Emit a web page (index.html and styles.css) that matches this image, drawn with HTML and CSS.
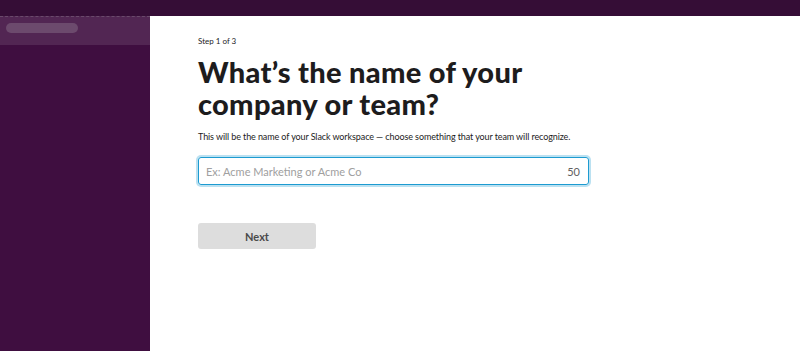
FILE: index.html
```html
<!DOCTYPE html>
<html lang="en">

<head>
    <meta charset="UTF-8">
    <meta name="viewport" content="width=device-width, initial-scale=1.0">
    <title>Create a workspace</title>
    <link rel="stylesheet" href="styles.css">
</head>

<body>
    <div class="topbar"></div>

    <div class="layout">
        <aside class="sidebar">
            <div class="sidebar-item">
                <span class="pill"></span>
            </div>
        </aside>

        <main class="content">
            <p class="step">Step 1 of 3</p>
            <h1>What’s the name of your company or team?</h1>
            <p class="lead">This will be the name of your Slack workspace — choose something that your team will recognize.</p>

            <form class="name-form">
                <div class="field">
                    <input type="text" placeholder="Ex: Acme Marketing or Acme Co">
                    <span class="counter">50</span>
                </div>
                <button type="submit" class="next">Next</button>
            </form>
        </main>
    </div>
</body>

</html>
```

FILE: styles.css
```css
body {
    font-family: Lato, "Noto Sans", sans-serif;
    margin: 0;
    padding: 0;
    background-color: #ffffff;
    color: #1d1c1d;
}

.topbar {
    height: 16px;
    background-color: #350d36;
}

.layout {
    display: flex;
    height: 335px;
}

.sidebar {
    width: 150px;
    flex-shrink: 0;
    background-color: #3f0e40;
}

.sidebar-item {
    height: 29px;
    background-color: #522653;
    border-top: 1px dashed #6a4a6b;
    box-sizing: border-box;
    padding: 6px 6px;
}

.pill {
    display: block;
    width: 72px;
    height: 10px;
    border-radius: 5px;
    background-color: #6c4a6d;
}

.content {
    padding: 20px 48px;
    flex: 1;
}

.step {
    font-size: 8px;
    margin: 0 0 10px 0;
    color: #1d1c1d;
}

h1 {
    font-size: 29px;
    line-height: 32px;
    font-weight: 900;
    margin: 0 0 11px 0;
    width: 380px;
    letter-spacing: 0.3px;
}

.lead {
    font-size: 9px;
    margin: 0 0 15px 0;
    letter-spacing: -0.1px;
}

.field {
    width: 391px;
    height: 28px;
    box-sizing: border-box;
    border: 1px solid #1d9bd1;
    border-radius: 3px;
    box-shadow: 0 0 0 2px rgba(29, 155, 209, 0.3);
    display: flex;
    align-items: center;
    padding: 0 8px 0 7px;
}

.field input {
    border: none;
    outline: none;
    flex: 1;
    font-family: Lato, sans-serif;
    font-size: 11px;
    padding: 0;
    color: #1d1c1d;
}

.field input::placeholder {
    color: #a0a0a0;
}

.counter {
    font-size: 11px;
    color: #616061;
}

.next {
    display: block;
    margin-top: 38px;
    width: 118px;
    height: 26px;
    background-color: #dddddd;
    color: #4a4a4a;
    border: none;
    border-radius: 3px;
    font-family: Lato, sans-serif;
    font-weight: bold;
    font-size: 11px;
    cursor: pointer;
}
```
